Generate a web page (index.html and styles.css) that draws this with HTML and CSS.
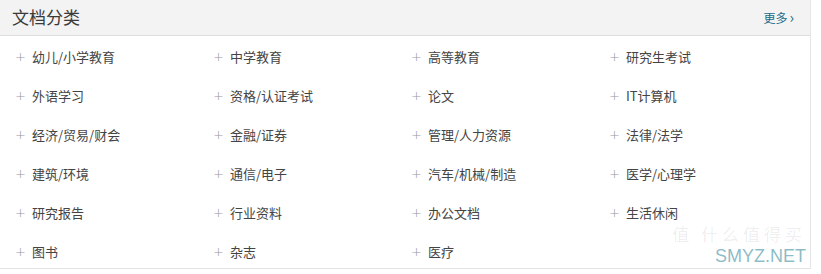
FILE: index.html
```html
<!DOCTYPE html>
<html lang="zh-CN">
<head>
<meta charset="utf-8">
<title>文档分类</title>
<link rel="stylesheet" href="styles.css">
</head>
<body>
<div class="panel">
  <div class="panel-head">
    <h2 class="panel-title">文档分类</h2>
    <a class="more" href="#">更多<span class="chev">›</span></a>
  </div>
  <ul class="cat-list">
    <li><span class="plus">+</span>幼儿/小学教育</li>
    <li><span class="plus">+</span>中学教育</li>
    <li><span class="plus">+</span>高等教育</li>
    <li><span class="plus">+</span>研究生考试</li>
    <li><span class="plus">+</span>外语学习</li>
    <li><span class="plus">+</span>资格/认证考试</li>
    <li><span class="plus">+</span>论文</li>
    <li><span class="plus">+</span>IT计算机</li>
    <li><span class="plus">+</span>经济/贸易/财会</li>
    <li><span class="plus">+</span>金融/证券</li>
    <li><span class="plus">+</span>管理/人力资源</li>
    <li><span class="plus">+</span>法律/法学</li>
    <li><span class="plus">+</span>建筑/环境</li>
    <li><span class="plus">+</span>通信/电子</li>
    <li><span class="plus">+</span>汽车/机械/制造</li>
    <li><span class="plus">+</span>医学/心理学</li>
    <li><span class="plus">+</span>研究报告</li>
    <li><span class="plus">+</span>行业资料</li>
    <li><span class="plus">+</span>办公文档</li>
    <li><span class="plus">+</span>生活休闲</li>
    <li><span class="plus">+</span>图书</li>
    <li><span class="plus">+</span>杂志</li>
    <li><span class="plus">+</span>医疗</li>
  </ul>
  <div class="watermark"><span class="wm-zh">值 什么值得买</span><span class="wm-en">SMYZ.NET</span></div>
</div>
</body>
</html>
```
FILE: styles.css
```css
html, body {
  margin: 0;
  padding: 0;
  background: #ffffff;
}
body {
  font-family: "Noto Sans CJK SC", "Noto Sans", sans-serif;
  color: #333;
}
.panel {
  position: relative;
  width: 810px;
  height: 268px;
  border-right: 1px solid #e6e6e6;
  border-bottom: 1px solid #e3e3e3;
  overflow: hidden;
}
.panel-head {
  height: 35px;
  background: #f3f3f3;
  border-bottom: 1px solid #dedede;
  display: flex;
  align-items: center;
  justify-content: space-between;
  padding: 0 16px 0 12px;
}
.panel-title {
  margin: 0;
  font-size: 17px;
  font-weight: normal;
  color: #3a3a3a;
  line-height: 1;
  margin-top: -2px;
}
.more {
  font-size: 12px;
  color: #1b6c8a;
  text-decoration: none;
  display: flex;
  align-items: center;
}
.chev {
  font-size: 15px;
  margin-left: 2px;
  line-height: 1;
  margin-top: -2px;
}
.cat-list {
  list-style: none;
  margin: 0;
  padding: 1px 0 0 15px;
  display: grid;
  grid-template-columns: repeat(4, 198px);
  grid-auto-rows: 39px;
}
.cat-list li {
  display: flex;
  align-items: center;
  font-size: 13px;
  color: #444;
}
.plus {
  color: #999;
  width: 17px;
  font-size: 13px;
  font-family: "DejaVu Sans", sans-serif;
  font-weight: 300;
}
.watermark {
  position: absolute;
  right: 4px;
  bottom: 3px;
  display: flex;
  flex-direction: column;
  align-items: flex-end;
  gap: 3px;
  pointer-events: none;
}
.wm-zh {
  font-size: 17px;
  color: rgba(0, 0, 0, 0.08);
  letter-spacing: 4px;
  line-height: 20px;
}
.wm-en {
  font-family: "Liberation Sans", sans-serif;
  font-size: 18px;
  color: rgba(40, 130, 150, 0.55);
  line-height: 18px;
}
```
